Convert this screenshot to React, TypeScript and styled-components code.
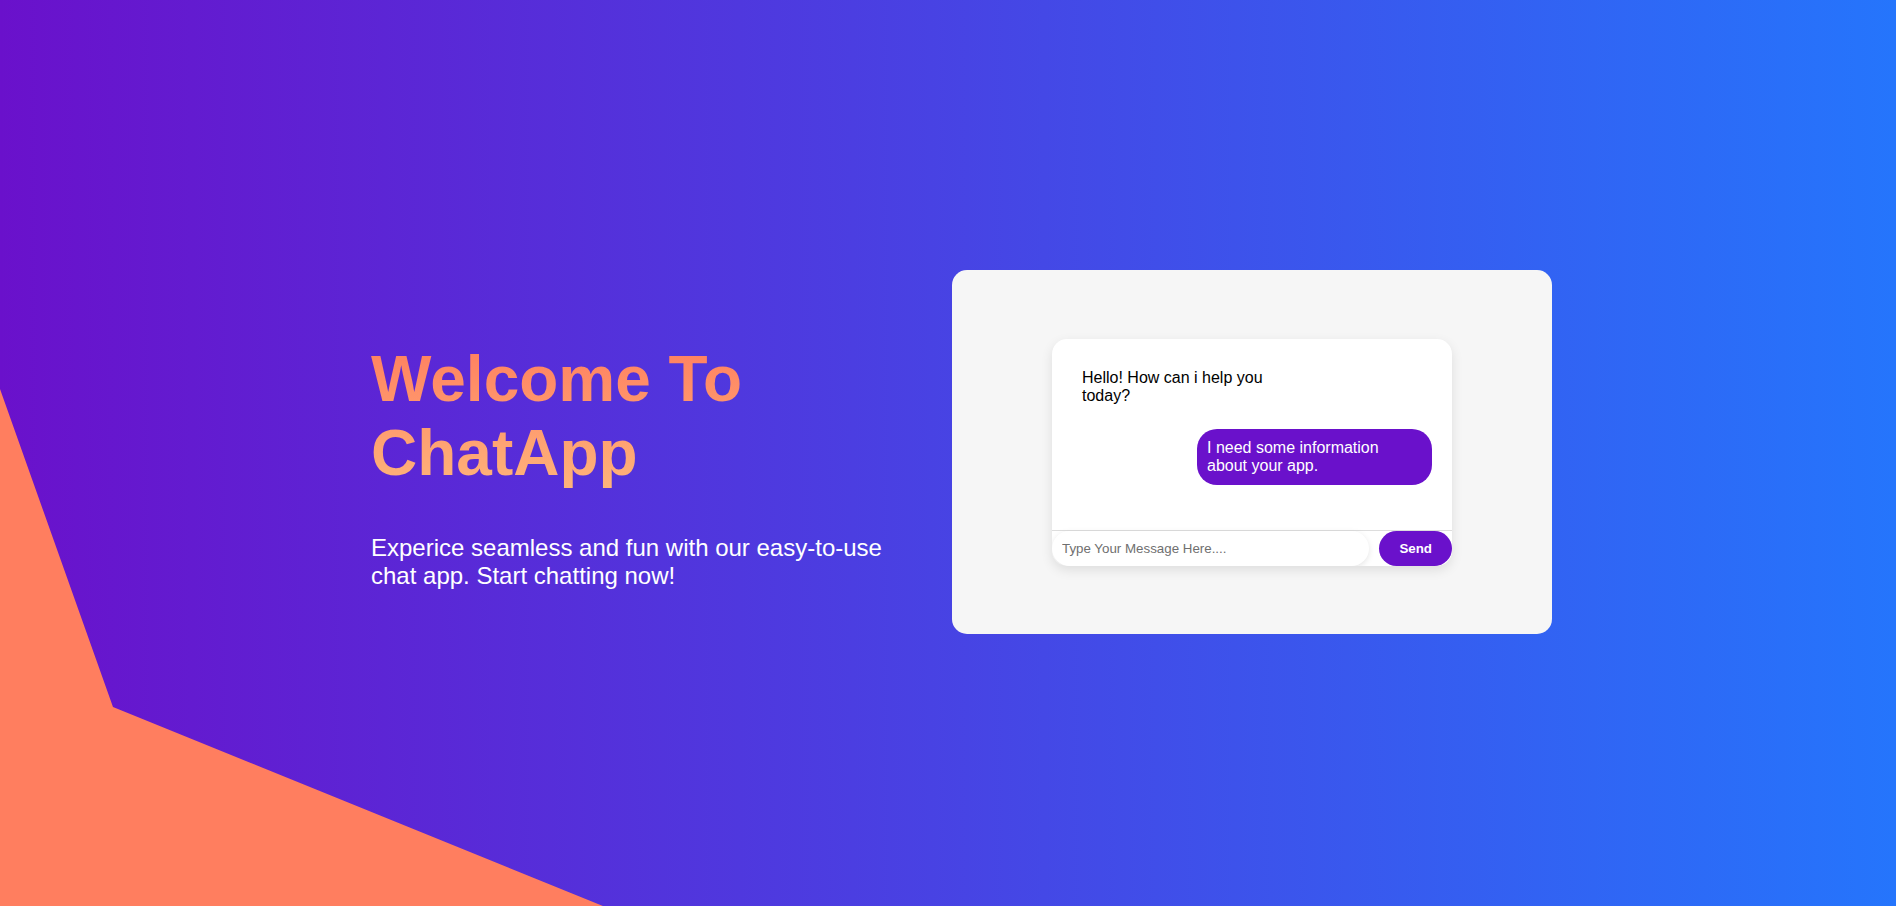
import React from "react";
import styled, { createGlobalStyle } from "styled-components";

const GlobalStyle = createGlobalStyle`
  html, body {
    margin: 0;
    padding: 0;
    height: 100%;
  }
  body {
    font-family: "Liberation Sans", Arial, Helvetica, sans-serif;
    overflow: hidden;
  }
  * {
    box-sizing: border-box;
  }
`;

const Page = styled.main`
  position: relative;
  height: 100vh;
  overflow: hidden;
  background: linear-gradient(to right, #6a11cb, #2575fc);
  display: flex;
  align-items: center;
  justify-content: space-between;
  padding: 0 344px 0 371px;
`;

const Shape = styled.div`
  position: absolute;
  inset: 0;
  background: #ff7e5f;
  clip-path: polygon(0 42.94%, 5.96% 78.04%, 31.8% 100%, 0 100%);
  pointer-events: none;
`;

const Hero = styled.section`
  position: relative;
  z-index: 1;
  max-width: 540px;
  padding-top: 26px;
`;

const Title = styled.h1`
  margin: 0 0 44px;
  font-size: 64px;
  font-weight: 700;
  line-height: normal;
  background: linear-gradient(to bottom, #ff7e5f, #feb47b);
  -webkit-background-clip: text;
  background-clip: text;
  color: transparent;
`;

const Lead = styled.p`
  margin: 0;
  font-size: 24px;
  line-height: normal;
  color: #ffffff;
`;

const Card = styled.section`
  position: relative;
  z-index: 1;
  flex-shrink: 0;
  width: 600px;
  height: 364px;
  margin-bottom: 2px;
  background: #f6f6f6;
  border-radius: 15px;
  display: flex;
  align-items: center;
  justify-content: center;
`;

const Chat = styled.div`
  width: 400px;
  background: #ffffff;
  border-radius: 15px;
  box-shadow: 0 4px 12px rgba(0, 0, 0, 0.1);
  overflow: hidden;
  display: flex;
  flex-direction: column;
`;

const Messages = styled.div`
  height: 192px;
  padding: 20px;
  display: flex;
  flex-direction: column;
  gap: 14px;
  border-bottom: 1px solid #dddddd;
  overflow-y: auto;
`;

const Bubble = styled.div<{ $mine?: boolean }>`
  align-self: ${(p) => (p.$mine ? "flex-end" : "flex-start")};
  max-width: 235px;
  padding: 10px;
  border-radius: 20px;
  font-size: 16px;
  line-height: normal;
  background: ${(p) => (p.$mine ? "#6a11cb" : "#ffffff")};
  color: ${(p) => (p.$mine ? "#ffffff" : "#000000")};
`;

const InputRow = styled.form`
  display: flex;
  gap: 10px;
  margin: 0;
`;

const MessageInput = styled.input`
  flex: 1;
  min-width: 0;
  border: none;
  outline: none;
  padding: 10px;
  border-radius: 20px;
  font-family: "Liberation Sans", Arial, sans-serif;
  font-size: 13.333px;
  line-height: normal;
  background: #ffffff;
  box-shadow: 0 2px 6px rgba(0, 0, 0, 0.1);
  &::placeholder {
    color: #6f6f6f;
  }
`;

const SendButton = styled.button`
  border: none;
  padding: 10px 20px;
  border-radius: 20px;
  background: #6a11cb;
  color: #ffffff;
  font-family: "Liberation Sans", Arial, sans-serif;
  font-size: 13.333px;
  font-weight: 700;
  line-height: normal;
  cursor: pointer;
`;

export default function App() {
  return (
    <>
      <GlobalStyle />
      <Page>
        <Shape />
        <Hero>
          <Title>
            Welcome To
            <br />
            ChatApp
          </Title>
          <Lead>
            Experice seamless and fun with our easy-to-use chat app. Start
            chatting now!
          </Lead>
        </Hero>
        <Card>
          <Chat>
            <Messages>
              <Bubble>Hello! How can i help you today?</Bubble>
              <Bubble $mine>I need some information about your app.</Bubble>
            </Messages>
            <InputRow onSubmit={(e) => e.preventDefault()}>
              <MessageInput type="text" placeholder="Type Your Message Here...." />
              <SendButton type="submit">Send</SendButton>
            </InputRow>
          </Chat>
        </Card>
      </Page>
    </>
  );
}
